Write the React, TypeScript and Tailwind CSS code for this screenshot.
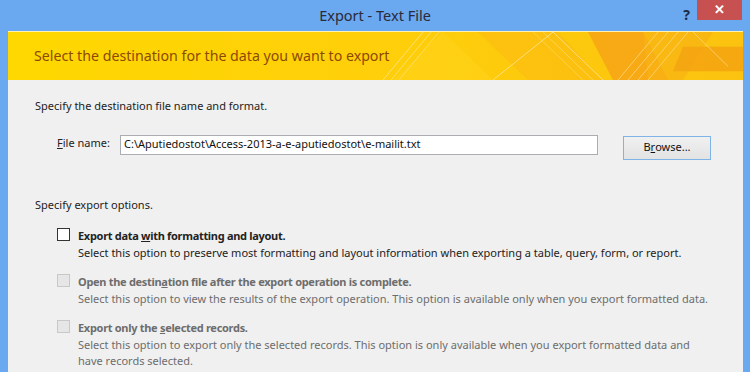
import React from 'react';

const font = { fontFamily: '"Noto Sans", "Open Sans", sans-serif' };

function BannerArt() {
  return (
    <svg className="absolute right-0 top-0 h-full w-[360px]" viewBox="0 0 360 49" preserveAspectRatio="none">
      <polygon points="60,0 110,49 10,49" fill="#ffd21a" opacity="0.6" />
      <polygon points="95,0 175,0 220,49 145,49" fill="#fbbf10" opacity="0.8" />
      <polygon points="205,0 260,0 285,49 230,49" fill="#f6a416" opacity="0.85" />
      <polygon points="260,0 330,0 300,49 265,49" fill="#f8b214" opacity="0.7" />
      <polygon points="300,15 360,15 360,40 290,40" fill="#f5a312" opacity="0.85" />
      <line x1="0" y1="49" x2="40" y2="0" stroke="#ffe9a0" strokeWidth="1" opacity="0.7" />
      <line x1="8" y1="49" x2="48" y2="0" stroke="#ffe9a0" strokeWidth="1" opacity="0.6" />
      <line x1="16" y1="49" x2="56" y2="0" stroke="#ffe9a0" strokeWidth="1" opacity="0.5" />
      <line x1="110" y1="49" x2="170" y2="0" stroke="#ffe59a" strokeWidth="1" opacity="0.8" />
      <line x1="170" y1="0" x2="220" y2="49" stroke="#ffe59a" strokeWidth="1" opacity="0.8" />
      <line x1="160" y1="0" x2="210" y2="49" stroke="#ffe59a" strokeWidth="1" opacity="0.5" />
      <line x1="150" y1="0" x2="200" y2="49" stroke="#ffe59a" strokeWidth="1" opacity="0.4" />
      <line x1="235" y1="49" x2="275" y2="0" stroke="#ffe59a" strokeWidth="1" opacity="0.6" />
      <line x1="245" y1="49" x2="285" y2="0" stroke="#ffe59a" strokeWidth="1" opacity="0.6" />
      <line x1="255" y1="49" x2="295" y2="0" stroke="#ffe59a" strokeWidth="1" opacity="0.6" />
      <line x1="265" y1="49" x2="305" y2="0" stroke="#ffe59a" strokeWidth="1" opacity="0.6" />
      <line x1="310" y1="0" x2="345" y2="35" stroke="#ffe59a" strokeWidth="1" opacity="0.6" />
    </svg>
  );
}

function Option({
  label,
  desc,
  enabled,
}: {
  label: React.ReactNode;
  desc: React.ReactNode;
  enabled?: boolean;
}) {
  return (
    <div className="flex">
      <div
        className={
          enabled
            ? 'mt-[1px] h-[13px] w-[13px] shrink-0 border border-[#333] bg-white'
            : 'mt-[1px] h-[13px] w-[13px] shrink-0 border border-[#c8c8c8] bg-[#e6e6e6]'
        }
      />
      <div className="ml-[8px]">
        <div
          className={
            enabled
              ? 'font-bold tracking-[-0.3px] text-[#222] leading-[18px]'
              : 'font-bold tracking-[-0.3px] text-[#6d6d6d] leading-[18px]'
          }
        >
          {label}
        </div>
        <div className={enabled ? 'text-[#222] leading-[16px]' : 'text-[#6d6d6d] leading-[16px]'}>{desc}</div>
      </div>
    </div>
  );
}

export default function App() {
  return (
    <div className="flex h-[372px] w-[750px] flex-col overflow-hidden bg-[#6aa8ef]" style={font}>
      <div className="relative flex h-[31px] shrink-0 items-center justify-center">
        <span className="text-[14.5px] text-[#2a2a3a]">Export - Text File</span>
        <span className="absolute right-[60px] top-[4px] text-[14px] font-bold text-[#1d2a44]">?</span>
        <div className="absolute right-[8px] top-0 flex h-[20px] w-[45px] items-center justify-center bg-[#c75050] text-[13px] font-bold text-white">
          ✕
        </div>
      </div>

      <div className="ml-[8px] mr-[7px] flex flex-1 flex-col bg-[#f0f0f0] text-[11px]">
        <div className="relative flex h-[49px] shrink-0 items-center overflow-hidden border-t border-[#fff3b0] bg-gradient-to-r from-[#fed800] via-[#fecf0a] to-[#fbc30f] pl-[26px]">
          <BannerArt />
          <span className="relative text-[14.2px] text-[#8c4a00]">Select the destination for the data you want to export</span>
        </div>

        <div className="pl-[27px]">
          <div className="mt-[18px] text-[#222]">Specify the destination file name and format.</div>

          <div className="mt-[19px] flex items-start">
            <div className="ml-[22px] mt-[1px] w-[63px] text-[#222]">
              <span className="underline">F</span>ile name:
            </div>
            <div className="mt-[1px] flex h-[20px] w-[478px] items-center border border-[#abadb3] bg-white px-[3px] text-[#111]">
              C:\Aputiedostot\Access-2013-a-e-aputiedostot\e-mailit.txt
            </div>
            <div className="ml-[25px] mt-[2px] flex h-[24px] w-[88px] items-center justify-center border border-[#7eb4ea] bg-gradient-to-b from-[#f0f0f0] to-[#e3e3e3] text-[#111]">
              B<span className="underline">r</span>owse...
            </div>
          </div>

          <div className="mt-[37px] text-[#222]">Specify export options.</div>

          <div className="ml-[22px] mt-[14px] flex flex-col gap-[12px]">
            <Option
              enabled
              label={
                <>
                  Export data <span className="underline">w</span>ith formatting and layout.
                </>
              }
              desc="Select this option to preserve most formatting and layout information when exporting a table, query, form, or report."
            />
            <Option
              label={
                <>
                  Open the destin<span className="underline">a</span>tion file after the export operation is complete.
                </>
              }
              desc="Select this option to view the results of the export operation. This option is available only when you export formatted data."
            />
            <Option
              label={
                <>
                  Export only the <span className="underline">s</span>elected records.
                </>
              }
              desc={
                <>
                  Select this option to export only the selected records. This option is only available when you export formatted data and
                  <br />
                  have records selected.
                </>
              }
            />
          </div>
        </div>
      </div>
    </div>
  );
}
